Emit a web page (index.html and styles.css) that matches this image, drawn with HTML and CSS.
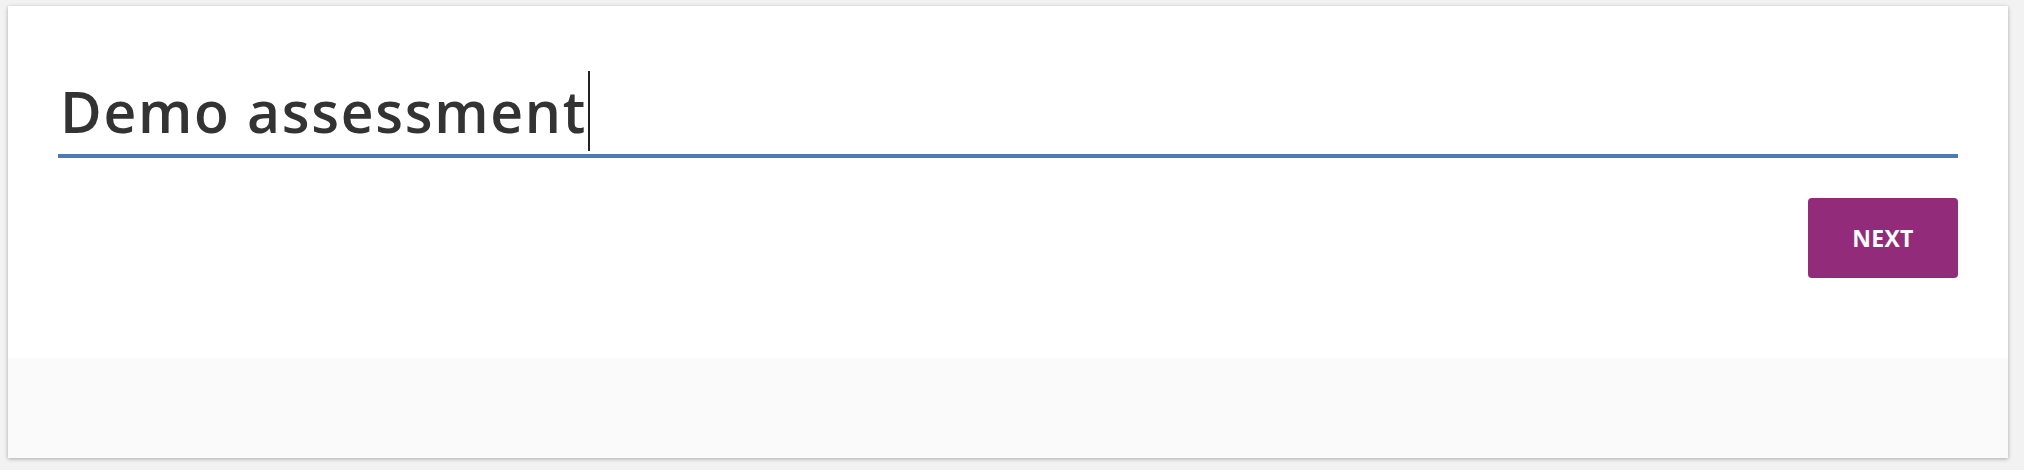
FILE: index.html
```html
<!DOCTYPE html>
<html lang="en">
<head>
<meta charset="utf-8">
<title>Demo assessment</title>
<link rel="stylesheet" href="styles.css">
</head>
<body>
  <div class="card">
    <div class="card-body">
      <div class="title-field">
        <span class="title-text">Demo assessment</span><span class="caret"></span>
      </div>
      <div class="actions">
        <button class="btn-next" type="button">NEXT</button>
      </div>
    </div>
    <div class="card-footer"></div>
  </div>
</body>
</html>
```

FILE: styles.css
```css
html, body {
  margin: 0;
  padding: 0;
}
body {
  background: #f2f2f2;
  font-family: "Open Sans", "Liberation Sans", sans-serif;
}
.card {
  width: 2000px;
  margin: 6px 8px;
  background: #ffffff;
  box-shadow: 0 1px 4px rgba(0, 0, 0, 0.3);
}
.card-body {
  box-sizing: border-box;
  height: 352px;
  padding: 64px 50px 0;
}
.title-field {
  display: flex;
  align-items: center;
  font-size: 57px;
  font-weight: 600;
  letter-spacing: 1.7px;
  line-height: 82px;
  color: #333333;
  padding-bottom: 2px;
  border-bottom: 4px solid #4b7bb0;
}
.title-text {
  padding-left: 2px;
}
.caret {
  width: 2px;
  height: 80px;
  margin-left: 1px;
  background: #222222;
}
.actions {
  display: flex;
  justify-content: flex-end;
  margin-top: 40px;
}
.btn-next {
  width: 150px;
  height: 80px;
  border: none;
  border-radius: 4px;
  background: #922b79;
  color: #ffffff;
  font-family: "Open Sans", "Liberation Sans", sans-serif;
  font-weight: 700;
  font-size: 23px;
  letter-spacing: 0.3px;
  padding: 0;
}
.card-footer {
  height: 100px;
  background: #fafafa;
}
```
